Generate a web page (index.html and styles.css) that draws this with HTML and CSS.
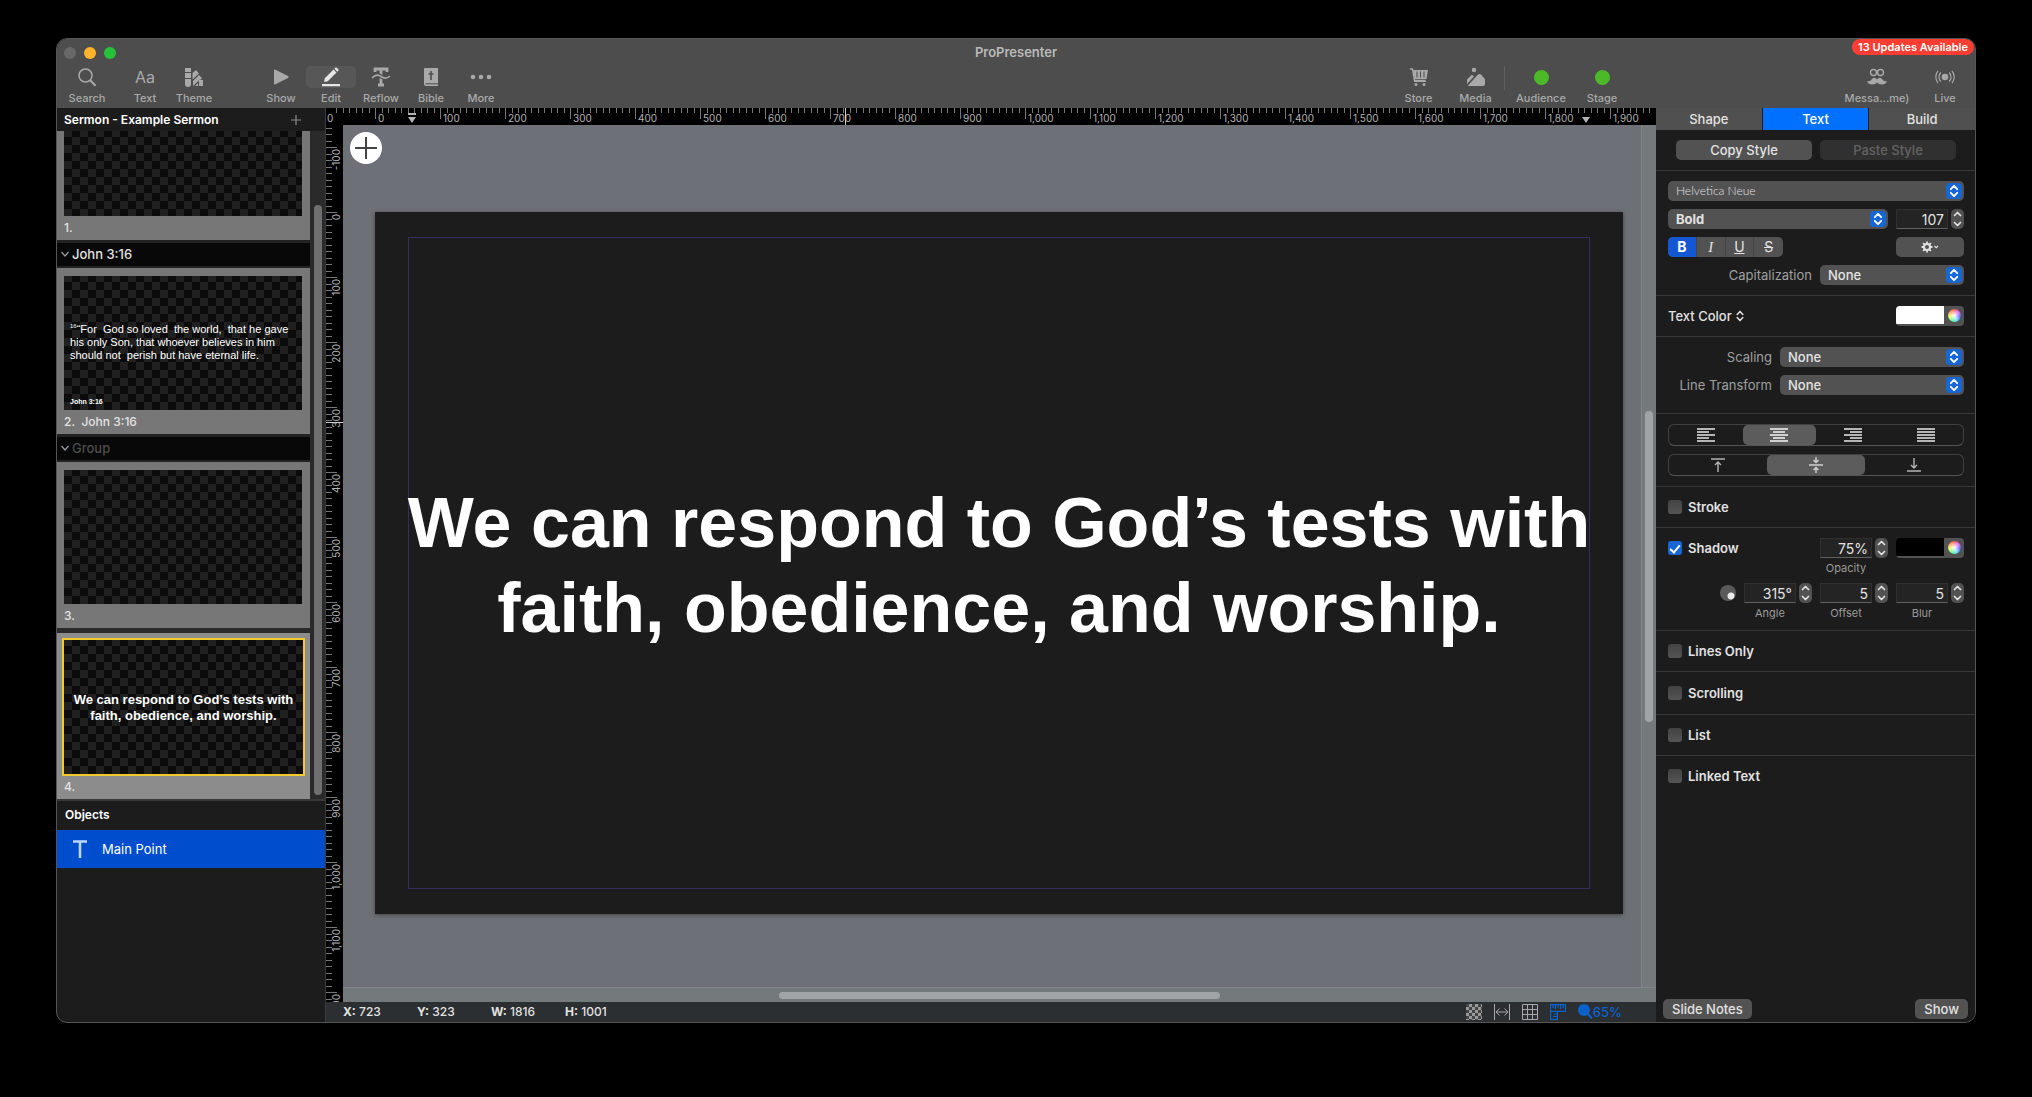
FILE: index.html
```html
<!DOCTYPE html>
<html lang="en">
<head>
<meta charset="utf-8">
<title>ProPresenter</title>
<link rel="stylesheet" href="styles.css">
</head>
<body>
<svg class="defs" aria-hidden="true">
  <symbol id="updown" viewBox="0 0 16 16"><path d="M4.8 6.2 8 2.8l3.200 3.400M4.800 9.800 8 13.200l3.200-3.400" fill="none" stroke="currentColor" stroke-width="1.800" stroke-linecap="round" stroke-linejoin="round"/></symbol>
  <symbol id="up" viewBox="0 0 13 10"><path d="M3.500 6.500l3-3 3 3" fill="none" stroke="currentColor" stroke-width="1.700" stroke-linecap="round" stroke-linejoin="round"/></symbol>
  <symbol id="down" viewBox="0 0 13 10"><path d="M3.500 3.500l3 3 3-3" fill="none" stroke="currentColor" stroke-width="1.700" stroke-linecap="round" stroke-linejoin="round"/></symbol>
  <symbol id="chev" viewBox="0 0 10 8"><path d="M1.500 2 5 6l3.500-4" fill="none" stroke="currentColor" stroke-width="1.300"/></symbol>
</svg>
<div class="window">
  <header class="titlebar">
    <div class="title-row">
      <div class="lights"><i class="light"></i><i class="light amber"></i><i class="light green"></i></div>
      <h1 class="title">ProPresenter</h1>
    </div>
    <a class="updates" href="#">13 Updates Available</a>
    <nav class="toolbar">
      <button class="tool w60"><span class="ico"><svg width="20" height="20" viewBox="0 0 20 20"><circle cx="8.500" cy="8.500" r="6.500" fill="none" stroke="currentColor" stroke-width="1.500"/><path d="M13.200 13.200 18.500 18.800" stroke="currentColor" stroke-width="2"/></svg></span>Search</button>
      <button class="tool w56"><span class="ico aa">Aa</span>Text</button>
      <button class="tool w42"><span class="ico"><svg width="18" height="20" viewBox="0 0 18 20" fill="currentColor"><path d="M0 1h6v4H0zM0 6h6v5H0zM0 12h6v5a3 3 0 0 1-6 0zM7.500 6 11 3l3 3.500-6.500 6zM8 14l6-6 3 3-1 1.500h-1L8 19zM10 19l3-3v3zM14 13h4v6h-4z"/></svg></span>Theme</button>
      <button class="tool w50 after-gap"><span class="ico"><svg width="18" height="18" viewBox="0 0 18 18" fill="currentColor"><path d="M2 2.500q0-1.500 1.500-.8L16 8q1.500 1 0 2L3.500 16.300Q2 17 2 15.500z"/></svg></span>Show</button>
      <button class="tool w50 on"><span class="ico"><svg width="20" height="20" viewBox="0 0 20 20" fill="currentColor"><path d="M3 15l.8-3.800L12.500 2.500l3 3L6.800 14.200zM13.300 1.700l1-1q.7-.5 1.400 0l1.600 1.600q.5.700 0 1.400l-1 1zM1 17h18v2.200H1z"/></svg></span>Edit</button>
      <button class="tool w50"><span class="ico"><svg width="20" height="20" viewBox="0 0 20 20"><path d="M4 5V2h12v3M10 2v16M7 18h6" fill="none" stroke="currentColor" stroke-width="2.800"/><path d="M1 11q4.500-5 9-1.500T19 9" fill="none" stroke="#4d4d4d" stroke-width="4"/><path d="M1 11q4.500-5 9-1.500T19 9" fill="none" stroke="currentColor" stroke-width="1.600"/></svg></span>Reflow</button>
      <button class="tool w50"><span class="ico"><svg width="16" height="20" viewBox="0 0 16 20"><path d="M1 2q0-1 1-1h13v18H3q-2 0-2-2z" fill="currentColor"/><path d="M8 4v9M5.500 7h5" stroke="#4d4d4d" stroke-width="1.600"/><path d="M2.500 16.800H15" stroke="#4d4d4d"/></svg></span>Bible</button>
      <button class="tool w50"><span class="ico"><svg width="22" height="6" viewBox="0 0 22 6" fill="currentColor"><circle cx="3" cy="3" r="2.300"/><circle cx="11" cy="3" r="2.300"/><circle cx="19" cy="3" r="2.300"/></svg></span>More</button>
      <span class="spring"></span>
      <button class="tool w57"><span class="ico"><svg width="20" height="20" viewBox="0 0 20 20"><path d="M1 2h2.500l2 11.500h11" fill="none" stroke="currentColor" stroke-width="1.400"/><path d="M4 3h15l-1.500 9H5.500z" fill="currentColor"/><path d="M8 4.500v6M11.500 4.500v6M15 4.500v6" stroke="#4d4d4d"/><path d="M5 14.500h12" stroke="currentColor" stroke-width="1.200"/><circle cx="7" cy="17.500" r="1.500" fill="currentColor"/><circle cx="15" cy="17.500" r="1.500" fill="currentColor"/></svg></span>Store</button>
      <button class="tool w57"><span class="ico"><svg width="20" height="20" viewBox="0 0 20 20" fill="currentColor"><circle cx="8" cy="3" r="2.200"/><path d="M1 12.500 5 8.500q1-.8 2 0L8 9.500 1 17zM2 18.500 12 7.500q1.500-1.200 3 0l3.500 4q.8 1 .5 3v2q0 2.500-2.500 2.500H3q-1 0-1-.5z"/></svg></span>Media</button>
      <span class="divider"></span>
      <button class="tool w74"><span class="ico"><i class="status-dot"></i></span>Audience</button>
      <button class="tool w48"><span class="ico"><i class="status-dot"></i></span>Stage</button>
      <button class="tool w84"><span class="ico"><svg width="22" height="20" viewBox="0 0 22 20"><circle cx="7.500" cy="5.500" r="3" fill="none" stroke="currentColor" stroke-width="1.400"/><circle cx="14.500" cy="5.500" r="3" fill="none" stroke="currentColor" stroke-width="1.400"/><path d="M11 12.500q-2.500-3-5-.5-1.500 2.500-5 2.500 1.500 3 5 3t5-2q1.500 2 5 2t5-3q-3.500 0-5-2.500-2.500-2.500-5 .5z" fill="currentColor"/></svg></span>Messa...me)</button>
      <button class="tool w52"><span class="ico"><svg width="20" height="20" viewBox="0 0 20 20"><circle cx="10" cy="10" r="3.300" fill="currentColor"/><path d="M5.800 5.500a6.500 6.500 0 0 0 0 9M14.200 5.500a6.500 6.500 0 0 1 0 9M3 3.800a10 10 0 0 0 0 12.400M17 3.800a10 10 0 0 1 0 12.400" fill="none" stroke="currentColor" stroke-width="1.200"/></svg></span>Live</button>
    </nav>
  </header>

  <div class="body">
    <aside class="sidebar">
      <div class="doc-head"><h2>Sermon - Example Sermon</h2><button class="add" aria-label="Add slide"><svg width="10" height="10" viewBox="0 0 10 10"><path d="M5 0v10M0 5h10" stroke="currentColor" stroke-width="1.200"/></svg></button></div>
      <div class="slides">
        <div class="list">
          <section class="card"><div class="thumb cut"></div><p class="cap">1.</p></section>
          <h3 class="group"><svg width="10" height="8"><use href="#chev"/></svg>John 3:16</h3>
          <section class="card full"><div class="thumb"><p class="verse"><sup>16</sup>“For&nbsp; God so loved&nbsp; the world,&nbsp; that he gave<br>his only Son, that whoever believes in him<br>should not&nbsp; perish but have eternal life.</p><p class="ref">John 3:16</p></div><p class="cap">2.&nbsp; John 3:16</p></section>
          <h3 class="group dim"><svg width="10" height="8"><use href="#chev"/></svg>Group</h3>
          <section class="card full"><div class="thumb"></div><p class="cap">3.</p></section>
          <section class="card chosen"><div class="thumb"><p class="point">We can respond to God’s tests with<br>faith, obedience, and worship.</p></div><p class="cap">4.</p></section>
        </div>
        <div class="track"><i class="knob"></i></div>
      </div>
      <h2 class="objects-head">Objects</h2>
      <button class="object"><svg width="14" height="18" viewBox="0 0 14 18"><path d="M0 1.500h14M7 1.500V18" stroke="#bcd7ff" stroke-width="2.600"/></svg>Main Point</button>
    </aside>

    <main class="work">
      <svg class="ruler-h" id="rulerH"></svg>
      <svg class="ruler-v" id="rulerV"></svg>
      <div class="canvas">
        <button class="add-object" aria-label="Add object"><svg width="24" height="24" viewBox="0 0 24 24"><path d="M12 1v22M1 12h22" stroke="#444" stroke-width="2"/></svg></button>
        <div class="stage"><div class="slide"><div class="frame"><p>We can respond to God’s tests with<br>faith, obedience, and worship.</p></div></div></div>
        <div class="vscroll"><i></i></div>
        <div class="hscroll"><i></i></div>
      </div>
      <footer class="status">
        <span><b>X:</b> 723</span><span><b>Y:</b> 323</span><span><b>W:</b> 1816</span><span><b>H:</b> 1001</span>
        <div class="status-tools">
          <button aria-label="Transparency"><i class="mini-check"></i></button>
          <button aria-label="Fit width"><svg width="16" height="16" viewBox="0 0 16 16"><path d="M.5 0v16M15.500 0v16M2 8h12M5.500 4.500 2 8l3.500 3.500M10.500 4.500 14 8l-3.500 3.500" fill="none" stroke="currentColor"/></svg></button>
          <button aria-label="Grid"><svg width="16" height="16" viewBox="0 0 16 16"><path d="M.5.5h15v15H.5zM5.500 0v16M10.500 0v16M0 5.500h16M0 10.500h16" fill="none" stroke="currentColor"/></svg></button>
          <button class="blue" aria-label="Rulers"><svg width="16" height="16" viewBox="0 0 16 16"><path d="M.6.6h14.800v6.800H7.400v8H.6z" fill="none" stroke="currentColor" stroke-width="1.200"/><path d="M3 1v3M5.500 1v4M8 1v3M10.500 1v4M13 1v3M1 7.400h7M7 10H4M7 12.500H3" stroke="currentColor" stroke-width="1.200"/></svg></button>
          <button class="blue zoom"><svg width="15" height="15" viewBox="0 0 15 15"><circle cx="6" cy="6" r="6" fill="currentColor"/><path d="M9 9l5 5.500" stroke="currentColor" stroke-width="2"/></svg>65%</button>
        </div>
      </footer>
    </main>

    <aside class="inspector">
      <nav class="tabs"><button>Shape</button><button class="active">Text</button><button>Build</button></nav>
      <section class="sec pad20 row g8"><button class="btn grow">Copy Style</button><button class="btn grow off" disabled>Paste Style</button></section>
      <section class="sec col">
        <div class="select"><select class="thin" aria-label="Font"><option>Helvetica Neue</option></select><span class="pop"><svg width="16" height="16"><use href="#updown"/></svg></span></div>
        <div class="row g8">
          <div class="select grow"><select class="heavy" aria-label="Typeface"><option>Bold</option></select><span class="pop"><svg width="16" height="16"><use href="#updown"/></svg></span></div>
          <div class="num"><input aria-label="Size" value="107"><span class="step"><button aria-label="Increase"><svg width="13" height="10"><use href="#up"/></svg></button><button aria-label="Decrease"><svg width="13" height="10"><use href="#down"/></svg></button></span></div>
        </div>
        <div class="row between">
          <div class="bius"><button class="active"><b>B</b></button><button><i>I</i></button><button><u>U</u></button><button><s>S</s></button></div>
          <button class="btn gear" aria-label="Options"><svg width="18" height="12" viewBox="0 0 18 12"><circle cx="6" cy="6" r="3" fill="none" stroke="currentColor" stroke-width="2"/><path d="M6 .5v2M6 9.500v2M.5 6h2M9.500 6h2M2.100 2.100l1.500 1.500M8.400 8.400l1.500 1.500M2.100 9.900l1.500-1.500M8.400 3.600l1.500-1.500" stroke="currentColor" stroke-width="1.800"/><path d="M13.500 5l1.700 1.700L17 5" fill="none" stroke="currentColor" stroke-width="1.200"/></svg></button>
        </div>
        <div class="field"><label for="caps">Capitalization</label><div class="select w144"><select id="caps"><option>None</option></select><span class="pop"><svg width="16" height="16"><use href="#updown"/></svg></span></div></div>
      </section>
      <section class="sec row between"><button class="plain">Text Color<svg width="12" height="14" viewBox="2 0 12 16"><use href="#updown" width="16" height="16"/></svg></button><button class="well" aria-label="Text color"><span class="fill white"></span><i class="wheel"></i></button></section>
      <section class="sec col tall">
        <div class="field"><label for="scale">Scaling</label><div class="select w184"><select id="scale"><option>None</option></select><span class="pop"><svg width="16" height="16"><use href="#updown"/></svg></span></div></div>
        <div class="field"><label for="lt">Line Transform</label><div class="select w184"><select id="lt"><option>None</option></select><span class="pop"><svg width="16" height="16"><use href="#updown"/></svg></span></div></div>
      </section>
      <section class="sec col">
        <div class="seg">
          <button aria-label="Left"><svg width="18" height="14" viewBox="0 0 18 14"><path d="M0 1h18M0 4h12M0 7h18M0 10h12M0 13h18" stroke="currentColor" stroke-width="2"/></svg></button>
          <button class="active" aria-label="Center"><svg width="18" height="14" viewBox="0 0 18 14"><path d="M0 1h18M3 4h12M0 7h18M3 10h12M0 13h18" stroke="currentColor" stroke-width="2"/></svg></button>
          <button aria-label="Right"><svg width="18" height="14" viewBox="0 0 18 14"><path d="M0 1h18M6 4h12M0 7h18M6 10h12M0 13h18" stroke="currentColor" stroke-width="2"/></svg></button>
          <button aria-label="Justify"><svg width="18" height="14" viewBox="0 0 18 14"><path d="M0 1h18M0 4h18M0 7h18M0 10h18M0 13h18" stroke="currentColor" stroke-width="2"/></svg></button>
        </div>
        <div class="seg">
          <button aria-label="Top"><svg width="14" height="14" viewBox="0 0 14 14"><path d="M0 1h14M7 14V4M4 7l3-3 3 3" fill="none" stroke="currentColor" stroke-width="1.400"/></svg></button>
          <button class="active" aria-label="Middle"><svg width="14" height="16" viewBox="0 0 14 16"><path d="M0 8h14M7 0v5M4.500 3 7 5.500 9.500 3M7 16v-5M4.500 13 7 10.500 9.500 13" fill="none" stroke="currentColor" stroke-width="1.400"/></svg></button>
          <button aria-label="Bottom"><svg width="14" height="14" viewBox="0 0 14 14"><path d="M0 13h14M7 0v10M4 7l3 3 3-3" fill="none" stroke="currentColor" stroke-width="1.400"/></svg></button>
        </div>
      </section>
      <section class="sec"><label class="check"><input type="checkbox">Stroke</label></section>
      <section class="sec shadow">
        <div class="row g8">
          <label class="check grow"><input type="checkbox" checked>Shadow</label>
          <div class="num"><input id="opacity" value="75%"><span class="step"><button aria-label="Increase"><svg width="13" height="10"><use href="#up"/></svg></button><button aria-label="Decrease"><svg width="13" height="10"><use href="#down"/></svg></button></span><label for="opacity">Opacity</label></div>
          <button class="well" aria-label="Shadow color"><span class="fill black"></span><i class="wheel"></i></button>
        </div>
        <div class="row g8 end">
          <i class="dial"></i>
          <div class="num"><input id="angle" value="315°"><span class="step"><button aria-label="Increase"><svg width="13" height="10"><use href="#up"/></svg></button><button aria-label="Decrease"><svg width="13" height="10"><use href="#down"/></svg></button></span><label for="angle">Angle</label></div>
          <div class="num"><input id="offset" value="5"><span class="step"><button aria-label="Increase"><svg width="13" height="10"><use href="#up"/></svg></button><button aria-label="Decrease"><svg width="13" height="10"><use href="#down"/></svg></button></span><label for="offset">Offset</label></div>
          <div class="num"><input id="blur" value="5"><span class="step"><button aria-label="Increase"><svg width="13" height="10"><use href="#up"/></svg></button><button aria-label="Decrease"><svg width="13" height="10"><use href="#down"/></svg></button></span><label for="blur">Blur</label></div>
        </div>
      </section>
      <section class="sec"><label class="check"><input type="checkbox">Lines Only</label></section>
      <section class="sec roomy"><label class="check"><input type="checkbox">Scrolling</label></section>
      <section class="sec"><label class="check"><input type="checkbox">List</label></section>
      <section class="sec last"><label class="check"><input type="checkbox">Linked Text</label></section>
      <footer class="foot"><button class="btn">Slide Notes</button><button class="btn">Show</button></footer>
    </aside>
  </div>
</div>
<script src="rulers.js"></script>
</body>
</html>
```
FILE: styles.css
```css
* { box-sizing: border-box; margin: 0; padding: 0; }
body { background: #000; color: #e2e2e2; font: 13px/16px Inter, "Liberation Sans", sans-serif; }
button, input, select { font: inherit; color: inherit; border: 0; background: none; }
button { display: flex; align-items: center; justify-content: center; }
svg { flex: none; display: block; }
.defs { width: 0; height: 0; position: absolute; }
.row { display: flex; align-items: center; }
.g8 { gap: 8px; }
.between { justify-content: space-between; }
.grow { flex: 1; }

.window { margin: 38px 56px 0; height: calc(100vh - 112px); border: 1px solid #555; border-radius: 11px; overflow: hidden; display: flex; flex-direction: column; background: #1c1c1c; position: relative; }
.titlebar { background: #4d4d4d; height: 69px; flex: none; }
.title-row { display: flex; align-items: center; height: 27px; }
.lights { display: flex; gap: 8px; padding-left: 7px; width: 80px; }
.light { width: 12px; height: 12px; border-radius: 50%; background: #686868; }
.amber { background: #fdb32a; }
.green { background: #27c138; }
.title { flex: 1; text-align: center; padding: 0 80px 2px 0; font-size: 13px; font-weight: 600; color: #b9b9b9; }
.updates { position: absolute; top: 0; right: 1px; height: 16px; padding: 0 6px; border-radius: 8px; background: #ff3d33; color: #fff; font-size: 11px; line-height: 16px; font-weight: 600; text-decoration: none; }
.toolbar { display: flex; padding-right: 4px; }
.tool { flex-direction: column; font-size: 11px; line-height: 14px; color: #a9a9a9; gap: 3px; font-weight: 500; }
.ico { height: 22px; width: 100%; display: flex; align-items: center; justify-content: center; border-radius: 5px; }
.tool.on .ico { background: #575757; color: #e6e6e6; }
.aa { font-size: 16px; font-weight: 400; }
.w42 { width: 42px; } .w48 { width: 48px; } .w50 { width: 50px; } .w52 { width: 52px; } .w56 { width: 56px; } .w57 { width: 57px; } .w60 { width: 60px; } .w74 { width: 74px; }
.w84 { width: 84px; margin-left: 209px; }
.after-gap { margin-left: 41px; }
.spring { flex: 1; }
.divider { width: 1px; height: 24px; background: #5e5e5e; margin-right: -1px; }
.status-dot { width: 15px; height: 15px; border-radius: 50%; background: #4cb928; }

.body { flex: 1; display: flex; min-height: 0; }
.sidebar { width: 269px; flex: none; display: flex; flex-direction: column; border-right: 1px solid #3a3a3a; }
.doc-head { height: 23px; display: flex; align-items: center; justify-content: space-between; padding: 0 24px 0 7px; }
h2 { font-size: 12px; font-weight: 600; color: #fff; }
.add { color: #8a8a8a; }
.slides { display: flex; height: 668px; flex: none; background: #2a2a2a; overflow: hidden; }
.list { flex: 1; }
.track { width: 15px; padding: 74px 3px 4px 4px; }
.knob { display: block; height: 100%; border-radius: 4px; background: #6f6f6f; }
.card { background: #777; padding: 0 8px 0 7px; }
.full { padding-top: 8px; }
.thumb { height: 134px; display: flex; flex-direction: column; background: repeating-conic-gradient(#0b0b0b 0 25%, #202020 0 50%) 0 -2px / 16px 16px; color: #fff; font-family: "Liberation Sans", Arial, sans-serif; }
.cut { height: 85px; }
.cap { height: 24px; line-height: 24px; font-size: 12px; font-weight: 500; }
.group { height: 28px; border: solid #222; border-width: 3px 0 2px; background: #080808; display: flex; align-items: center; gap: 2px; padding: 0 0 1px 3px; font-size: 13px; font-weight: 500; }
.group svg { color: #999; }
.dim { color: #4d4d4d; }
.verse { padding: 47px 0 0 6px; font-size: 11px; line-height: 13px; white-space: nowrap; flex: 1; }
.verse sup { font-size: 6px; line-height: 0; }
.ref { padding: 0 6px 3px; font-size: 7px; line-height: 10px; font-weight: 700; }
.chosen { margin-top: 5px; background: #8c8c8c; padding: 5px 5px 0; }
.chosen .thumb { height: 138px; border: 2px solid #f4c92b; justify-content: center; }
.chosen .cap { padding-left: 2px; line-height: 22px; }
.point { padding-top: 2px; font-size: 13px; line-height: 16px; font-weight: 700; text-align: center; white-space: nowrap; }
.objects-head { height: 31px; line-height: 28px; padding-left: 8px; border-top: 2px solid #383838; }
.object { height: 38px; background: #004dce; color: #fff; justify-content: flex-start; gap: 15px; padding-left: 16px; }

.work { flex: 1; min-width: 0; display: grid; grid-template: 17px minmax(0, 1fr) 20px / 17px minmax(0, 1fr); background: #000; }
.ruler-h { grid-column: 1 / 3; width: 100%; height: 17px; }
.ruler-v { width: 17px; height: 100%; }
.ruler-h text, .ruler-v text { font-size: 10px; fill: #b4b4b4; }
.canvas { background: #6d7077; display: grid; grid-template: minmax(0, 1fr) 15px / minmax(0, 1fr) 15px; position: relative; }
.add-object { position: absolute; left: 7px; top: 7px; width: 32px; height: 32px; border-radius: 50%; background: #fff; }
.stage { padding: 87px 18px 0 32px; }
.slide { aspect-ratio: 16 / 9; background: #1c1c1c; padding: 25px 33px; box-shadow: 0 1px 4px #444; display: flex; }
.frame { flex: 1; min-width: 0; border: 1px solid #352c60; padding-top: 5px; display: flex; align-items: center; justify-content: center; text-align: center; white-space: nowrap; color: #fff; font: 700 70px/85px "Liberation Sans", Arial, sans-serif; }
.vscroll { border-left: 1px solid #82868a; background: #74797b; padding: 286px 3px 265px 3px; }
.vscroll i, .hscroll i { display: block; height: 100%; border-radius: 4px; background: #a0a4a6; }
.hscroll { grid-column: 1 / 3; border-top: 1px solid #82868a; background: #74797b; padding: 4px 436px 3px; }
.status { grid-column: 1 / 3; background: #2c2f31; display: flex; align-items: center; padding: 0 34px 1px 17px; font-size: 12px; font-weight: 500; white-space: nowrap; overflow: hidden; }
.status > span { width: 74px; }
.status b { font-weight: 700; }
.status-tools { display: flex; gap: 12px; margin-left: auto; color: #a8a8a8; }
.mini-check { width: 16px; height: 16px; background: repeating-conic-gradient(#999 0 25%, #444 0 50%) 0 0 / 6px 6px; }
.status-tools .blue { color: #0a62cc; }
.zoom { font-size: 13px; }

.inspector { width: 319px; flex: none; display: flex; flex-direction: column; background: #1c1c1c; }
.tabs { display: grid; grid-template-columns: 1fr 1fr 1fr; gap: 1px; height: 22px; }
.tabs button { background: #505050; font-weight: 500; }
.tabs .active { background: #0070ff; color: #fff; }
.sec { border-bottom: 1px solid #383838; padding: 10px 11px 10px 12px; }
.pad20 { padding-left: 20px; padding-right: 19px; }
.col { display: flex; flex-direction: column; gap: 8px; }
.tall { padding-bottom: 18px; }
.roomy { padding-top: 11px; padding-bottom: 11px; }
.btn { height: 20px; border-radius: 5px; background: #525252; font-weight: 500; padding: 0 9px; }
.off { background: #303030; color: #636363; }
.select { display: grid; height: 20px; border-radius: 5px; background: #525252; align-items: center; }
.select > * { grid-area: 1 / 1; }
.select select { appearance: none; width: 100%; height: 20px; padding-left: 8px; font-weight: 500; }
.select .thin { font-family: Lato, Inter, sans-serif; font-weight: 300; font-size: 12px; }
.select .heavy { font-weight: 700; }
.pop { justify-self: end; margin-right: 2px; border-radius: 4px; background: #1766d6; color: #fff; pointer-events: none; }
.field { display: flex; justify-content: flex-end; align-items: center; gap: 8px; color: #a0a0a0; }
.field select { color: #e2e2e2; }
.w144 { width: 144px; } .w184 { width: 184px; }
.num { display: grid; grid-template-columns: 52px 13px; column-gap: 3px; align-items: center; }
.num input { width: 52px; height: 20px; background: #242424; border: 1px solid #303030; border-bottom-color: #606060; text-align: right; padding-right: 3px; font-size: 14px; }
.num label { font-size: 11px; line-height: 14px; text-align: center; color: #9a9a9a; padding-top: 3px; }
.step { height: 20px; border-radius: 5px; background: #525252; overflow: hidden; }
.step button { height: 10px; width: 13px; }
.bius { display: grid; grid-template-columns: repeat(4, 1fr); width: 115px; height: 20px; border-radius: 5px; background: #525252; overflow: hidden; }
.bius button { border-right: 1px solid #454545; font-size: 14px; }
.bius .active { background: #1457d4; color: #fff; }
.bius button:last-child { border: 0; }
.bius i { font-family: "Liberation Serif", serif; font-size: 15px; }
.gear { width: 68px; }
.plain { gap: 2px; font-weight: 500; }
.well { width: 68px; height: 20px; border-radius: 4px; overflow: hidden; background: #525252; justify-content: flex-start; gap: 4px; align-items: flex-start; }
.fill { width: 48px; height: 18px; }
.white { background: #fff; } .black { background: #000; }
.wheel { width: 13px; height: 13px; margin-top: 3px; border-radius: 50%; background: radial-gradient(#fff, transparent 70%), conic-gradient(#f55, #c5f, #55f, #5df, #5f8, #df5, #f95, #f55); }
.seg { display: flex; height: 22px; border: 1px solid #404040; border-bottom-color: #555; border-radius: 6px; color: #b5b5b5; }
.seg button { flex: 1; border-radius: 5px; }
.seg .active { background: #5c5c5c; color: #d0d0d0; }
.check { display: flex; align-items: center; gap: 6px; height: 20px; font-weight: 600; }
.check input { appearance: none; width: 14px; height: 14px; border-radius: 3px; background: linear-gradient(#424242, #555); display: grid; place-items: center; }
.check input:checked { background: #1766d6; }
.check input:checked::before { content: ""; width: 4px; height: 8px; border: solid #fff; border-width: 0 2px 2px 0; transform: rotate(40deg); }
.shadow { display: flex; flex-direction: column; gap: 8px; }
.shadow .row { align-items: flex-start; }
.end { justify-content: flex-end; }
.dial { width: 16px; height: 16px; margin-top: 2px; border-radius: 50%; background: radial-gradient(circle at 11px 11px, #e8e8e8 3px, #5a5a5a 4px); }
.last { border: 0; }
.foot { margin-top: auto; display: flex; justify-content: space-between; padding: 0 7px 3px; }
```
FILE: rulers.js
```js
// Both rulers mark canvas units: a short tick each 10, a labelled one each 100.
const SCALE = 0.65;
const NS = "http://www.w3.org/2000/svg";

function add(svg, tag, attrs, text) {
  const el = document.createElementNS(NS, tag);
  for (const key in attrs) el.setAttribute(key, attrs[key]);
  if (text) el.textContent = text;
  svg.appendChild(el);
}

const h = document.getElementById("rulerH");
const v = document.getElementById("rulerV");
const width = h.getBoundingClientRect().width;
const height = v.getBoundingClientRect().height;

for (let u = -60; u <= 1960; u += 10) {
  const x = Math.round(49 + u * SCALE);
  const major = u % 100 === 0;
  if (x > width) break;
  add(h, "rect", { x, y: 0, width: 1, height: major ? 11 : 5, fill: "#777" });
  if (major) add(h, "text", { x: x + 3, y: 14 }, u.toLocaleString("en-US"));
}
add(h, "text", { x: 1, y: 14 }, "0");
add(h, "rect", { x: 519, y: 0, width: 1, height: 17, fill: "#ccc" });
add(h, "path", { d: "M82 5h8v2h-8zM82 9h8l-4 6z", fill: "#b4b4b4" });
add(h, "path", { d: "M1256 9h8l-4 6z", fill: "#b4b4b4" });

for (let u = -130; u <= 1210; u += 10) {
  const y = Math.round(87 + u * SCALE);
  const major = u % 100 === 0;
  if (y > height) break;
  add(v, "rect", { x: 0, y, width: major ? 11 : 6, height: 1, fill: "#777" });
  if (major) add(v, "text", { transform: `translate(14 ${y + 2}) rotate(-90)`, "text-anchor": "end" }, u.toLocaleString("en-US"));
}
add(v, "rect", { x: 0, y: 297, width: 17, height: 1, fill: "#ccc" });
```
